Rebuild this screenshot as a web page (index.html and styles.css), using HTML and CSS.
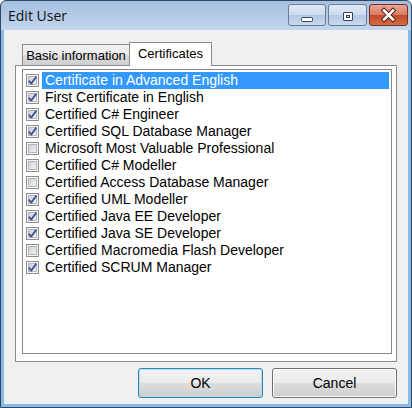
FILE: index.html
```html
<!DOCTYPE html>
<html>
<head>
<meta charset="utf-8">
<link rel="stylesheet" href="styles.css">
</head>
<body>
<svg class="defs" width="0" height="0" aria-hidden="true">
  <defs>
    <linearGradient id="cbfill" x1="0" y1="0" x2="1" y2="1">
      <stop offset="0" stop-color="#c9cdd4"/>
      <stop offset="1" stop-color="#f5f6f7"/>
    </linearGradient>
    <symbol id="cb-off" viewBox="0 0 13 13">
      <rect x="0.5" y="0.5" width="12" height="12" fill="#f6f6f6" stroke="#8e8f8f"/>
      <rect x="2.5" y="2.5" width="8" height="8" fill="url(#cbfill)" stroke="#b4b8bd"/>
    </symbol>
    <symbol id="cb-on" viewBox="0 0 13 13">
      <rect x="0.5" y="0.5" width="12" height="12" fill="#f6f6f6" stroke="#8e8f8f"/>
      <rect x="2.5" y="2.5" width="8" height="8" fill="url(#cbfill)" stroke="#b4b8bd"/>
      <path d="M2.8 6.6 L5.2 9.6 L10.4 2.6" fill="none" stroke="#3f5597" stroke-width="1.8" stroke-linejoin="round"/>
    </symbol>
  </defs>
</svg>
<div class="window">
  <div class="titlebar">
    <span class="title">Edit User</span>
    <div class="caption">
      <div class="cbtn cmin">
        <svg width="38" height="22" viewBox="0 0 38 22"><rect x="13.5" y="13.5" width="11" height="4" rx="1" fill="#fff" stroke="#34435c"/></svg>
      </div>
      <div class="cbtn cmax">
        <svg width="39" height="22" viewBox="0 0 39 22"><rect x="15.5" y="8.5" width="9" height="8" rx="0.5" fill="#fff" stroke="#34435c"/><rect x="18.5" y="11.5" width="3" height="2" fill="#c4d4e8" stroke="#34435c"/></svg>
      </div>
      <div class="cbtn cclose">
        <svg width="39" height="22" viewBox="0 0 39 22"><path d="M15 6.5 L24 15.5 M24 6.5 L15 15.5" stroke="#5b2418" stroke-width="4.6" stroke-linecap="square" fill="none"/><path d="M15 6.5 L24 15.5 M24 6.5 L15 15.5" stroke="#ffffff" stroke-width="2.6" stroke-linecap="square" fill="none"/></svg>
      </div>
    </div>
  </div>
  <div class="client">
    <div class="tabs">
      <div class="tab tab-basic">Basic information</div>
      <div class="tab tab-active">Certificates</div>
    </div>
    <div class="panel">
      <div class="listbox">
        <div class="item"><svg class="cb"><use href="#cb-on"/></svg><span class="label selected">Certificate in Advanced English</span></div>
        <div class="item"><svg class="cb"><use href="#cb-on"/></svg><span class="label">First Certificate in English</span></div>
        <div class="item"><svg class="cb"><use href="#cb-on"/></svg><span class="label">Certified C# Engineer</span></div>
        <div class="item"><svg class="cb"><use href="#cb-on"/></svg><span class="label">Certified SQL Database Manager</span></div>
        <div class="item"><svg class="cb"><use href="#cb-off"/></svg><span class="label">Microsoft Most Valuable Professional</span></div>
        <div class="item"><svg class="cb"><use href="#cb-off"/></svg><span class="label">Certified C# Modeller</span></div>
        <div class="item"><svg class="cb"><use href="#cb-off"/></svg><span class="label">Certified Access Database Manager</span></div>
        <div class="item"><svg class="cb"><use href="#cb-on"/></svg><span class="label">Certified UML Modeller</span></div>
        <div class="item"><svg class="cb"><use href="#cb-on"/></svg><span class="label">Certified Java EE Developer</span></div>
        <div class="item"><svg class="cb"><use href="#cb-on"/></svg><span class="label">Certified Java SE Developer</span></div>
        <div class="item"><svg class="cb"><use href="#cb-off"/></svg><span class="label">Certified Macromedia Flash Developer</span></div>
        <div class="item"><svg class="cb"><use href="#cb-on"/></svg><span class="label">Certified SCRUM Manager</span></div>
      </div>
    </div>
    <div class="buttons">
      <div class="btn btn-default">OK</div>
      <div class="btn">Cancel</div>
    </div>
  </div>
</div>
</body>
</html>
```
FILE: styles.css
```css
html, body {
  margin: 0;
  padding: 0;
  background: #ffffff;
}
.defs {
  position: absolute;
  width: 0;
  height: 0;
}
.window {
  width: 412px;
  height: 408px;
  box-sizing: border-box;
  border: 1px solid #34465e;
  border-radius: 6px 6px 0 0;
  background: linear-gradient(to bottom, #a4bfe0 0px, #c2d6ee 29px, #86bbe6 29px, #86bbe6 100%);
  display: flex;
  flex-direction: column;
  overflow: hidden;
}
.titlebar {
  height: 29px;
  flex: none;
  display: flex;
  align-items: flex-start;
  padding: 0 3px 0 7px;
}
.title {
  font-family: "Open Sans", "Noto Sans", sans-serif;
  font-size: 14px;
  line-height: 19px;
  padding-top: 5px;
  color: #111;
}
.caption {
  margin-left: auto;
  margin-top: 3px;
  display: flex;
  gap: 2px;
}
.cbtn {
  height: 22px;
  box-sizing: border-box;
  border: 1px solid #6a7c98;
  border-radius: 3px;
  display: flex;
  align-items: center;
  justify-content: center;
  position: relative;
  overflow: hidden;
}
.cbtn svg {
  position: absolute;
  left: -1px;
  top: -1px;
}
.cmin {
  width: 38px;
  background: linear-gradient(to bottom, #e1eaf5 0%, #ccdbee 50%, #b3c9e3 50%, #c7d9ee 100%);
}
.cmax {
  width: 39px;
  background: linear-gradient(to bottom, #e1eaf5 0%, #ccdbee 50%, #b3c9e3 50%, #c7d9ee 100%);
}
.cclose {
  width: 39px;
  border-color: #7a2f20;
  background: linear-gradient(to bottom, #e8a593 0%, #d77b63 50%, #c14a2b 50%, #d46c45 100%);
}
.client {
  flex: 1;
  margin: 0 3px 3px 3px;
  background: #f0f0f0;
  padding: 12px 11px 0 11px;
  display: flex;
  flex-direction: column;
  font-family: "Liberation Sans", Arial, sans-serif;
  font-size: 13px;
  color: #000;
}
.tabs {
  height: 23px;
  display: flex;
  align-items: flex-end;
  padding-left: 7px;
}
.tab {
  box-sizing: border-box;
  border: 1px solid #898c95;
  border-bottom: none;
  text-align: center;
  line-height: 15px;
}
.tab-basic {
  width: 108px;
  height: 21px;
  padding-top: 3px;
  background: linear-gradient(to bottom, #f3f3f3 0%, #ebebeb 50%, #dddddd 50%, #cfcfcf 100%);
}
.tab-active {
  width: 83px;
  height: 24px;
  padding-top: 3px;
  margin-left: -1px;
  margin-bottom: -1px;
  background: #ffffff;
  position: relative;
  z-index: 1;
}
.panel {
  height: 297px;
  box-sizing: border-box;
  border: 1px solid #898c95;
  background: #ffffff;
  padding: 3px 4px 7px 6px;
  display: flex;
}
.listbox {
  flex: 1;
  border: 1px solid #828790;
  background: #ffffff;
  padding: 2px 2px 0 3px;
  font-size: 14px;
}
.item {
  height: 17px;
  display: flex;
  align-items: center;
}
.cb {
  width: 13px;
  height: 13px;
  flex: none;
}
.label {
  margin-left: 3px;
  padding-left: 3px;
  line-height: 17px;
  white-space: nowrap;
}
.label.selected {
  flex: 1;
  background: #3399ff;
  color: #ffffff;
}
.buttons {
  display: flex;
  justify-content: flex-end;
  gap: 9px;
  margin-top: 6px;
}
.btn {
  width: 125px;
  height: 30px;
  box-sizing: border-box;
  border: 1px solid #707070;
  border-radius: 3px;
  background: linear-gradient(to bottom, #f2f2f2 0%, #ebebeb 50%, #dddddd 50%, #cfcfcf 100%);
  box-shadow: inset 0 0 0 1px #fbfbfb;
  display: flex;
  align-items: center;
  justify-content: center;
  line-height: 16px;
  font-size: 14px;
}
.btn-default {
  border-color: #3c7fb1;
  box-shadow: inset 0 0 0 1px #a8e0f8;
}
```
